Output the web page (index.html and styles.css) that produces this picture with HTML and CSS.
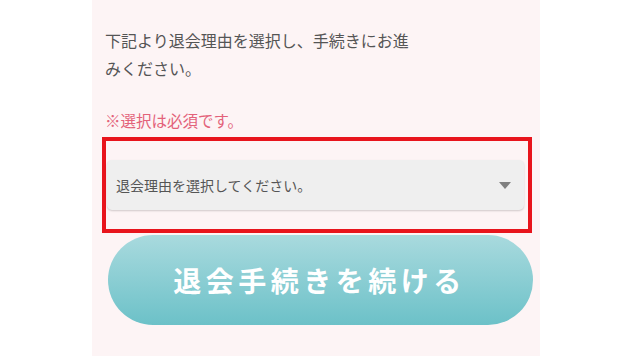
FILE: index.html
```html
<html>
    <head>
        <meta charset="utf-8">
        <link rel="stylesheet" href="styles.css">
    </head>
    <body>
        <div class="panel">
            <p class="lead">下記より退会理由を選択し、手続きにお進みください。</p>
            <p class="note">※選択は必須です。</p>
            <div class="highlight">
                <div class="select">
                    <span class="select-label">退会理由を選択してください。</span>
                    <span class="select-arrow"></span>
                </div>
            </div>
            <button class="continue">退会手続きを続ける</button>
        </div>
    </body>
</html>
```

FILE: styles.css
```css
body {
    margin: 0;
    background: white;
    font-family: "Noto Sans CJK JP", "Noto Sans", sans-serif;
}
.panel {
    width: 448px;
    height: 356px;
    margin-left: 92px;
    padding: 26px 0 0 0;
    box-sizing: border-box;
    background: #fdf4f5;
}
.lead {
    margin: 0 0 0 13px;
    width: 310px;
    font-size: 16px;
    line-height: 28px;
    color: #555;
}
.note {
    margin: 24px 0 3px 13px;
    font-size: 15.5px;
    line-height: 28px;
    color: #e3627a;
}
.highlight {
    margin: 0 8px 0 10px;
    padding: 19px 4px 19px 1px;
    border: 4px solid #e8141c;
}
.select {
    display: flex;
    align-items: center;
    height: 50px;
    padding: 0 13px 0 9px;
    background: #efefef;
    border-radius: 5px;
    box-shadow: 0 1px 2px rgba(0, 0, 0, 0.18);
}
.select-label {
    flex: 1;
    font-size: 14px;
    color: #555;
}
.select-arrow {
    width: 0;
    height: 0;
    border-left: 6px solid transparent;
    border-right: 6px solid transparent;
    border-top: 7px solid #808080;
}
.continue {
    display: block;
    width: 425px;
    height: 90px;
    margin: 2px 0 0 16px;
    border: none;
    border-radius: 45px;
    background: linear-gradient(#a9dade, #6cc1c8);
    color: white;
    font-family: inherit;
    font-size: 28px;
    font-weight: bold;
    letter-spacing: 4.5px;
    padding-left: 4px;
}
```
